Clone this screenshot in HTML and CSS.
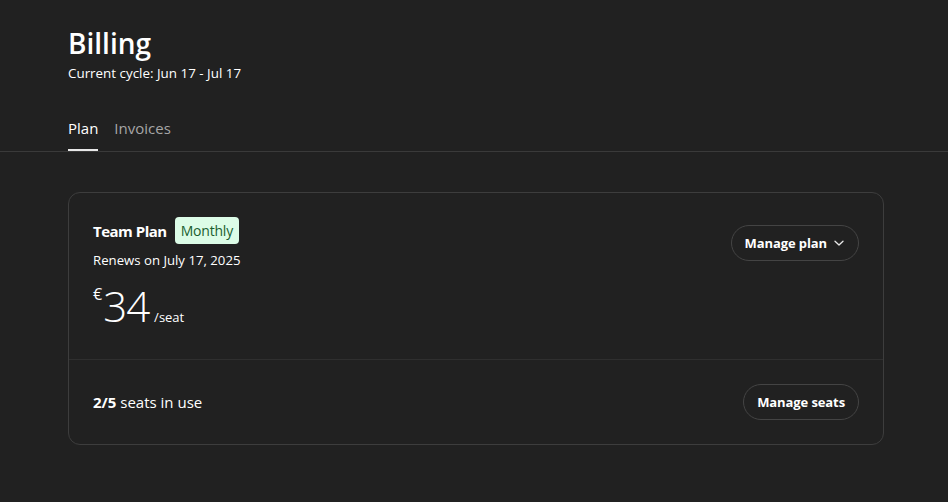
FILE: index.html
```html
<!DOCTYPE html>
<html>
<head>
<meta charset="utf-8">
<link rel="stylesheet" href="styles.css">
</head>
<body>
<header class="head">
  <h1 class="title">Billing</h1>
  <p class="sub">Current cycle: Jun 17 - Jul 17</p>
  <nav class="tabs">
    <span class="tab active">Plan</span>
    <span class="tab">Invoices</span>
  </nav>
</header>
<main class="main">
  <section class="card">
    <div class="top">
      <div class="info">
        <div class="name-row">
          <span class="name">Team Plan</span>
          <span class="badge">Monthly</span>
        </div>
        <div class="renew">Renews on July 17, 2025</div>
        <div class="price"><span class="cur">€</span><span class="amt">34</span><span class="per">/seat</span></div>
      </div>
      <button class="btn">Manage plan
        <svg class="chev" width="12" height="12" viewBox="0 0 12 12"><path d="M2 4.2 L6 8 L10 4.2" fill="none" stroke="#e8e8e8" stroke-width="1.3" stroke-linecap="round" stroke-linejoin="round"/></svg>
      </button>
    </div>
    <div class="bottom">
      <div class="seats"><b>2/5</b> seats in use</div>
      <button class="btn">Manage seats</button>
    </div>
  </section>
</main>
</body>
</html>
```
FILE: styles.css
```css
* { box-sizing: border-box; }
html, body { margin: 0; padding: 0; }
body {
  background: #212121;
  color: #fff;
  font-family: "Open Sans", "Noto Sans", sans-serif;
  width: 948px;
  height: 502px;
  overflow: hidden;
}
.head {
  border-bottom: 1px solid #3a3a3a;
  padding: 24px 68px 0;
}
.title {
  margin: 0;
  font-size: 28px;
  font-weight: 600;
  line-height: 38px;
}
.sub {
  margin: 2px 0 0;
  font-size: 13.4px;
  line-height: 18px;
}
.tabs {
  display: flex;
  gap: 16px;
  margin-top: 35px;
}
.tab {
  font-size: 15px;
  line-height: 22px;
  padding-bottom: 10px;
  color: #a6a6a6;
  border-bottom: 2px solid transparent;
}
.tab.active {
  color: #fff;
  border-bottom-color: #e8e8e8;
}
.main {
  padding: 40px 64px 0 68px;
}
.card {
  border: 1px solid #3d3d3d;
  border-radius: 12px;
}
.top {
  display: flex;
  justify-content: space-between;
  align-items: flex-start;
  padding: 24px 24px 29px 24px;
  border-bottom: 1px solid #2f2f2f;
}
.name-row {
  display: flex;
  align-items: center;
  gap: 8px;
}
.name {
  font-size: 15px;
  font-weight: 700;
  letter-spacing: -0.5px;
}
.badge {
  background: #dcfce7;
  color: #1a5e2f;
  font-size: 14px;
  font-weight: 500;
  line-height: 27px;
  padding: 0 6px;
  border-radius: 4px;
  letter-spacing: -0.2px;
}
.renew {
  margin-top: 7px;
  font-size: 13.2px;
  line-height: 18px;
}
.price {
  display: flex;
  align-items: baseline;
  margin-top: 13px;
}
.cur {
  font-size: 16px;
  line-height: 16px;
  align-self: flex-start;
  margin-top: 4px;
  margin-right: 1px;
}
.amt {
  font-size: 42px;
  line-height: 48px;
  font-weight: 300;
  letter-spacing: -1px;
}
.per {
  font-size: 13px;
  margin-left: 5px;
}
.btn {
  margin-top: 8px;
  background: transparent;
  color: #fff;
  border: 1px solid #444;
  border-radius: 999px;
  height: 36px;
  padding: 0 13px;
  font-family: inherit;
  font-size: 13px;
  font-weight: 700;
  display: flex;
  align-items: center;
  gap: 6px;
  letter-spacing: -0.1px;
}
.bottom {
  display: flex;
  justify-content: space-between;
  align-items: center;
  padding: 24px;
}
.bottom .btn { margin-top: 0; }
.seats {
  font-size: 15px;
}
```
